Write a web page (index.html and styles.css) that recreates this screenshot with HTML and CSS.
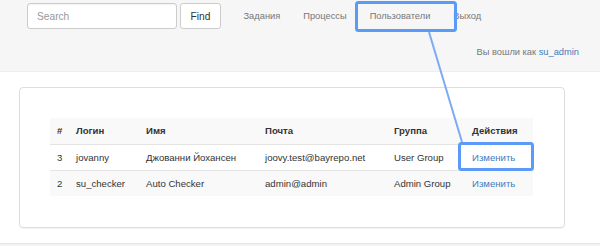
FILE: index.html
```html
<!DOCTYPE html>
<html>
<head>
<meta charset="utf-8">
<link rel="stylesheet" href="styles.css">
</head>
<body>
<header class="header">
  <div class="topbar">
    <form class="search">
      <input class="search-input" type="text" placeholder="Search">
      <button class="find" type="button">Find</button>
    </form>
    <nav class="nav">
      <a class="nav-link">Задания</a>
      <a class="nav-link">Процессы</a>
      <a class="nav-link">Пользователи</a>
      <a class="nav-link">Выход</a>
    </nav>
  </div>
  <div class="userline">Вы вошли как <a class="link">su_admin</a></div>
</header>
<main class="main">
  <div class="card">
    <table class="table">
      <colgroup>
        <col class="c-id"><col class="c-login"><col class="c-name"><col class="c-mail"><col class="c-group"><col class="c-act">
      </colgroup>
      <thead>
        <tr><th>#</th><th>Логин</th><th>Имя</th><th>Почта</th><th>Группа</th><th>Действия</th></tr>
      </thead>
      <tbody>
        <tr><td>3</td><td>jovanny</td><td>Джованни Йохансен</td><td>joovy.test@bayrepo.net</td><td>User Group</td><td><a class="link">Изменить</a></td></tr>
        <tr class="odd"><td>2</td><td>su_checker</td><td>Auto Checker</td><td>admin@admin</td><td>Admin Group</td><td><a class="link">Изменить</a></td></tr>
      </tbody>
    </table>
  </div>
</main>
<footer class="footer"></footer>
<svg class="annot" width="600" height="246" viewBox="0 0 600 246">
  <line x1="429" y1="32" x2="462" y2="142" stroke="#7eaaf5" stroke-width="2"/>
  <rect x="356.5" y="2.5" width="99" height="28" rx="2" fill="none" stroke="#5b9af7" stroke-width="3"/>
  <rect x="459.5" y="143.5" width="73" height="26" rx="2" fill="none" stroke="#5b9af7" stroke-width="3"/>
</svg>
</body>
</html>
```

FILE: styles.css
```css
* { box-sizing: border-box; }
html, body { margin: 0; padding: 0; }
body {
  font-family: "Liberation Sans", Arial, sans-serif;
  font-size: 9.6px;
  color: #333;
  background: #fff;
  width: 600px;
  height: 246px;
  overflow: hidden;
  position: relative;
}
.header {
  background: #f6f6f6;
  height: 72px;
  border-bottom: 1px solid #eee;
}
.topbar {
  display: flex;
  align-items: center;
  padding: 3px 0 0 27px;
  height: 29px;
}
.search { display: flex; margin: 0; }
.search-input {
  width: 150px;
  height: 26px;
  border: 1px solid #ccc;
  border-radius: 3px;
  padding: 0 9px;
  font-family: inherit;
  font-size: 10.2px;
  color: #555;
  background: #fff;
  box-shadow: inset 0 1px 1px rgba(0,0,0,.05);
}
.search-input::placeholder { color: #999; }
.find {
  margin-left: 3px;
  width: 41px;
  height: 26px;
  border: 1px solid #ccc;
  border-radius: 3px;
  background: #fff;
  font-family: inherit;
  font-size: 10.2px;
  color: #333;
  padding: 0;
}
.nav { display: flex; margin-left: 11px; }
.nav-link {
  padding: 0 11.5px;
  color: #777;
  font-size: 9.3px;
}
.userline {
  text-align: right;
  padding-right: 21px;
  margin-top: 18px;
  color: #777;
  font-size: 9.3px;
}
.link { color: #3f7cbd; text-decoration: none; }
.main { padding: 15px 0 0 19px; }
.card {
  width: 546px;
  height: 141px;
  border: 1px solid #ddd;
  border-radius: 4px;
  padding: 30px;
  box-shadow: 0 1px 1px rgba(0,0,0,.05);
}
.table {
  width: 483px;
  border-collapse: collapse;
  table-layout: fixed;
}
.c-id { width: 20px; }
.c-login { width: 70px; }
.c-name { width: 119px; }
.c-mail { width: 129px; }
.c-group { width: 78px; }
.c-act { width: 67px; }
.table th, .table td {
  height: 26px;
  padding: 0 4px 0 6px;
  text-align: left;
  white-space: nowrap;
  overflow: hidden;
  vertical-align: middle;
}
.table th:first-child, .table td:first-child { padding-left: 7px; }
.table th {
  font-weight: bold;
  background: #f9f9f9;
  border-bottom: 1px solid #e4e4e4;
}
.table tbody tr.odd td { background: #f9f9f9; border-top: 1px solid #e4e4e4; }
.footer {
  margin-top: 15px;
  height: 10px;
  background: #f3f3f3;
  border-top: 1px solid #e6e6e6;
}
.annot { position: absolute; left: 0; top: 0; pointer-events: none; }
```
